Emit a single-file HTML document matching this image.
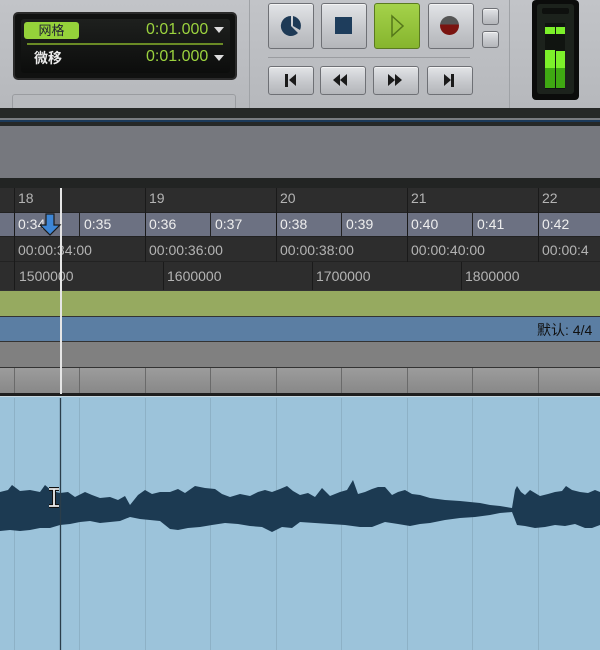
<!DOCTYPE html>
<html><head><meta charset="utf-8"><style>
*{margin:0;padding:0;box-sizing:border-box}
body{width:600px;height:650px;overflow:hidden;position:relative;background:#9cc3da;font-family:"Liberation Sans","Noto Sans CJK SC",sans-serif}
.a{position:absolute}
.btn{position:absolute;border:1px solid #6e7075;border-radius:3px;background:linear-gradient(#e2e4e7,#c4c6ca 60%,#b4b6ba);box-shadow:inset 0 1px 0 #f4f4f4}
.t{position:absolute;color:#b4b4b4;font-size:14px}
.v{position:absolute;width:1px}
</style></head><body>
<div class="a" style="left:0;top:0;width:600px;height:108px;background:linear-gradient(#c2c4c8,#b6b8bc)"></div>
<div class="a" style="left:13px;top:12px;width:224px;height:68px;background:#101110;border-radius:5px;border:2px solid #2a2a2a"></div>
<div class="a" style="left:21px;top:19px;width:209px;height:54px;background:linear-gradient(#1e201e,#0c0d0c);border-radius:3px"></div>
<div class="a" style="left:24px;top:22px;width:55px;height:17px;background:#95d23a;border-radius:3px;color:#223;font-size:13px;line-height:17px;text-align:center">网格</div>
<div class="a" style="left:27px;top:43px;width:196px;height:2px;background:#6a8a25"></div>
<div class="a" style="left:34px;top:48px;color:#ececec;font-size:14px;font-weight:bold">微移</div>
<div class="a" style="left:146px;top:21px;color:#9bd23e;font-size:16px">0:01.000</div>
<div class="a" style="left:146px;top:48px;color:#9bd23e;font-size:16px">0:01.000</div>
<div class="a" style="left:214px;top:27px;border:5px solid transparent;border-top:6px solid #ddd;border-bottom:0"></div>
<div class="a" style="left:214px;top:55px;border:5px solid transparent;border-top:6px solid #ddd;border-bottom:0"></div>
<div class="a" style="left:12px;top:94px;width:224px;height:16px;border:1px solid #9a9ca0;border-radius:3px;background:#b8babe"></div>
<div class="a" style="left:249px;top:0;width:1px;height:108px;background:#9fa2a6"></div>
<div class="a" style="left:509px;top:0;width:1px;height:108px;background:#9fa2a6"></div>
<div class="a" style="left:268px;top:57px;width:202px;height:1px;background:#9a9ca0"></div>
<div class="btn" style="left:268px;top:3px;width:46px;height:46px"></div>
<svg class="a" style="left:279px;top:14px" width="24" height="24"><path d="M12 2 A10 10 0 1 0 19 19 L12 12 Z" fill="#1e3a56"/><path d="M14 2 A10 10 0 0 1 21 16 L14 12Z" fill="#1e3a56"/></svg>
<div class="btn" style="left:321px;top:3px;width:46px;height:46px"></div>
<div class="a" style="left:335px;top:17px;width:17px;height:17px;background:#1e3d5c"></div>
<div class="a" style="left:374px;top:3px;width:46px;height:46px;border:1px solid #5a7a20;border-radius:3px;background:linear-gradient(#a4d24a,#86b52e)"></div>
<svg class="a" style="left:390px;top:14px" width="16" height="24"><path d="M2 2 L13 12 L2 22 Z" fill="none" stroke="#55781a" stroke-width="1.5"/></svg>
<div class="btn" style="left:428px;top:3px;width:46px;height:46px"></div>
<div class="a" style="left:440px;top:16px;width:19px;height:19px;border-radius:50%;background:linear-gradient(#555 45%,#7a1410 45%)"></div>
<div class="btn" style="left:482px;top:8px;width:17px;height:17px"></div>
<div class="btn" style="left:482px;top:31px;width:17px;height:17px"></div>
<div class="btn" style="left:268px;top:66px;width:46px;height:29px"></div>
<div class="a" style="left:285px;top:74px;width:3px;height:13px;background:#1a1a1a"></div><div class="a" style="left:289px;top:74px;border:6.5px solid transparent;border-right:7px solid #1a1a1a;border-left:0"></div>
<div class="btn" style="left:320px;top:66px;width:46px;height:29px"></div>
<div class="a" style="left:333px;top:74px;border:6.5px solid transparent;border-right:7px solid #1a1a1a;border-left:0"></div><div class="a" style="left:340px;top:74px;border:6.5px solid transparent;border-right:7px solid #1a1a1a;border-left:0"></div>
<div class="btn" style="left:373px;top:66px;width:46px;height:29px"></div>
<div class="a" style="left:388px;top:74px;border:6.5px solid transparent;border-left:7px solid #1a1a1a;border-right:0"></div><div class="a" style="left:395px;top:74px;border:6.5px solid transparent;border-left:7px solid #1a1a1a;border-right:0"></div>
<div class="btn" style="left:427px;top:66px;width:46px;height:29px"></div>
<div class="a" style="left:444px;top:74px;border:6.5px solid transparent;border-left:7px solid #1a1a1a;border-right:0"></div><div class="a" style="left:451px;top:74px;width:3px;height:13px;background:#1a1a1a"></div>
<div class="a" style="left:532px;top:0;width:47px;height:100px;background:#0b0c0b;border-radius:4px"></div>
<div class="a" style="left:537px;top:4px;width:37px;height:90px;background:#1c221c;border-radius:3px"></div>
<div class="a" style="left:542px;top:8px;width:27px;height:6px;background:#0e100e;border-radius:2px"></div>
<div class="a" style="left:545px;top:23px;width:20px;height:66px;background:#101410"></div>
<div class="a" style="left:545px;top:27px;width:10px;height:7px;background:#7cf02a"></div>
<div class="a" style="left:556px;top:27px;width:9px;height:7px;background:#7cf02a"></div>
<div class="a" style="left:545px;top:50px;width:10px;height:18px;background:#7cf02a"></div>
<div class="a" style="left:556px;top:51px;width:9px;height:17px;background:#7cf02a"></div>
<div class="a" style="left:545px;top:68px;width:10px;height:20px;background:#3fa812"></div>
<div class="a" style="left:556px;top:68px;width:9px;height:20px;background:#3fa812"></div>
<div class="a" style="left:0;top:108px;width:600px;height:18px;background:#262827"></div>
<div class="a" style="left:0;top:118px;width:600px;height:2px;background:#7a7c80"></div>
<div class="a" style="left:0;top:120px;width:600px;height:2px;background:#1c3a5a"></div>
<div class="a" style="left:0;top:126px;width:600px;height:52px;background:#76787e"></div>
<div class="a" style="left:0;top:178px;width:600px;height:10px;background:#222423"></div>
<div class="a" style="left:0;top:188px;width:600px;height:24px;background:#2d2d2d"></div>
<div class="a" style="left:0;top:212px;width:600px;height:25px;background:#6c7182;border-top:1px solid #222;border-bottom:1px solid #222"></div>
<div class="a" style="left:0;top:237px;width:600px;height:25px;background:#2d2d2d;border-bottom:1px solid #222"></div>
<div class="a" style="left:0;top:262px;width:600px;height:28px;background:#2d2d2d"></div>
<div class="v" style="left:14px;top:188px;height:102px;background:#1a1a1a"></div>
<div class="v" style="left:145px;top:188px;height:74px;background:#1a1a1a"></div>
<div class="v" style="left:276px;top:188px;height:74px;background:#1a1a1a"></div>
<div class="v" style="left:407px;top:188px;height:74px;background:#1a1a1a"></div>
<div class="v" style="left:538px;top:188px;height:74px;background:#1a1a1a"></div>
<div class="v" style="left:79px;top:212px;height:25px;background:#222"></div>
<div class="v" style="left:210px;top:212px;height:25px;background:#222"></div>
<div class="v" style="left:341px;top:212px;height:25px;background:#222"></div>
<div class="v" style="left:472px;top:212px;height:25px;background:#222"></div>
<div class="v" style="left:163px;top:262px;height:28px;background:#1a1a1a"></div>
<div class="v" style="left:312px;top:262px;height:28px;background:#1a1a1a"></div>
<div class="v" style="left:461px;top:262px;height:28px;background:#1a1a1a"></div>
<div class="t" style="left:18px;top:190px">18</div><div class="t" style="left:149px;top:190px">19</div><div class="t" style="left:280px;top:190px">20</div><div class="t" style="left:411px;top:190px">21</div><div class="t" style="left:542px;top:190px">22</div>
<div class="t" style="left:18px;top:216px;color:#eee">0:34</div><div class="t" style="left:84px;top:216px;color:#eee">0:35</div><div class="t" style="left:149px;top:216px;color:#eee">0:36</div><div class="t" style="left:215px;top:216px;color:#eee">0:37</div><div class="t" style="left:280px;top:216px;color:#eee">0:38</div><div class="t" style="left:346px;top:216px;color:#eee">0:39</div><div class="t" style="left:411px;top:216px;color:#eee">0:40</div><div class="t" style="left:477px;top:216px;color:#eee">0:41</div><div class="t" style="left:542px;top:216px;color:#eee">0:42</div>
<div class="t" style="left:18px;top:242px">00:00:34:00</div><div class="t" style="left:149px;top:242px">00:00:36:00</div><div class="t" style="left:280px;top:242px">00:00:38:00</div><div class="t" style="left:411px;top:242px">00:00:40:00</div><div class="t" style="left:542px;top:242px">00:00:4</div>
<div class="t" style="left:19px;top:268px">1500000</div><div class="t" style="left:167px;top:268px">1600000</div><div class="t" style="left:316px;top:268px">1700000</div><div class="t" style="left:465px;top:268px">1800000</div>
<div class="a" style="left:0;top:290px;width:600px;height:26px;background:#96aa60;border-top:1px solid #333"></div>
<div class="a" style="left:0;top:316px;width:600px;height:26px;background:#5b7ea3;border-top:1px solid #333;border-bottom:1px solid #333"></div>
<div class="a" style="left:537px;top:320px;color:#111;font-size:14px;white-space:nowrap">默认: 4/4</div>
<div class="a" style="left:0;top:342px;width:600px;height:25px;background:#808080"></div>
<div class="a" style="left:0;top:367px;width:600px;height:26px;background:linear-gradient(#9c9c9c,#888);border-top:1px solid #333"></div>
<div class="v" style="left:14px;top:368px;height:25px;background:#6a6a6a"></div><div class="v" style="left:79px;top:368px;height:25px;background:#6a6a6a"></div><div class="v" style="left:145px;top:368px;height:25px;background:#6a6a6a"></div><div class="v" style="left:210px;top:368px;height:25px;background:#6a6a6a"></div><div class="v" style="left:276px;top:368px;height:25px;background:#6a6a6a"></div><div class="v" style="left:341px;top:368px;height:25px;background:#6a6a6a"></div><div class="v" style="left:407px;top:368px;height:25px;background:#6a6a6a"></div><div class="v" style="left:472px;top:368px;height:25px;background:#6a6a6a"></div><div class="v" style="left:538px;top:368px;height:25px;background:#6a6a6a"></div>
<div class="a" style="left:0;top:393px;width:600px;height:4px;background:#1e1e1e;border-bottom:1px solid #c8d8e0"></div>
<svg class="a" style="left:0;top:398px" width="600" height="252">
<g stroke="#8db1c6" stroke-width="1"><line x1="14.5" y1="0" x2="14.5" y2="252"/><line x1="79.5" y1="0" x2="79.5" y2="252"/><line x1="145.5" y1="0" x2="145.5" y2="252"/><line x1="210.5" y1="0" x2="210.5" y2="252"/><line x1="276.5" y1="0" x2="276.5" y2="252"/><line x1="341.5" y1="0" x2="341.5" y2="252"/><line x1="407.5" y1="0" x2="407.5" y2="252"/><line x1="472.5" y1="0" x2="472.5" y2="252"/><line x1="538.5" y1="0" x2="538.5" y2="252"/></g>
<g transform="translate(0,-398)">
<path fill="#1c3a52" d="M0 492 L8 490 L12 485 L20 491 L30 490 L40 492 L45 485 L52 491 L60 493 L68 492 L75 497 L85 492 L92 495 L100 498 L110 497 L118 500 L125 496 L130 505 L138 495 L145 490 L152 494 L160 492 L170 492 L178 489 L185 493 L195 486 L205 488 L215 489 L222 494 L230 497 L240 494 L250 496 L258 492 L265 490 L272 492 L280 489 L287 486 L293 491 L300 495 L308 493 L315 497 L322 488 L330 496 L340 492 L347 490 L353 480 L358 494 L365 492 L372 489 L378 487 L385 487 L392 495 L398 492 L405 490 L412 494 L420 495 L430 498 L445 500 L460 501 L470 502 L480 503 L490 505 L500 506 L512 508 L515 490 L517 486 L521 492 L525 495 L530 490 L535 493 L540 496 L548 494 L555 492 L562 491 L566 486 L572 490 L580 492 L588 493 L595 490 L600 492
L600 525 L592 528 L585 528 L575 524 L565 526 L555 525 L545 527 L535 528 L525 526 L517 525 L512 512 L500 513 L490 515 L475 517 L460 518 L445 520 L430 523 L420 524 L410 526 L398 524 L385 522 L372 527 L360 527 L345 525 L330 524 L315 523 L300 522 L292 528 L282 527 L272 532 L262 527 L250 526 L238 524 L225 523 L212 525 L200 527 L188 528 L178 530 L170 529 L160 521 L150 520 L140 519 L130 517 L120 521 L110 522 L100 523 L90 521 L80 522 L70 524 L60 525 L50 528 L40 528 L30 530 L20 531 L10 530 L0 531 Z"/>
</g>
<line x1="60.5" y1="0" x2="60.5" y2="252" stroke="#2a3d4a" stroke-width="1.3"/>
</svg>
<div class="a" style="left:60px;top:188px;width:2px;height:206px;background:#e6e6e6"></div>
<svg class="a" style="left:40px;top:213px" width="24" height="24"><path d="M6 1 H14 V12 H20 L10 22 L0 12 H6 Z" fill="#3d86d6" stroke="#1a1a1a" stroke-width="1.2"/></svg>
<svg class="a" style="left:47px;top:487px" width="14" height="22"><path d="M2 2 H12 M7 2 V19 M2 19 H12" stroke="#111" stroke-width="4" fill="none"/><path d="M2 2 H12 M7 2 V19 M2 19 H12" stroke="#eee" stroke-width="1.8" fill="none"/></svg>
</body></html>
